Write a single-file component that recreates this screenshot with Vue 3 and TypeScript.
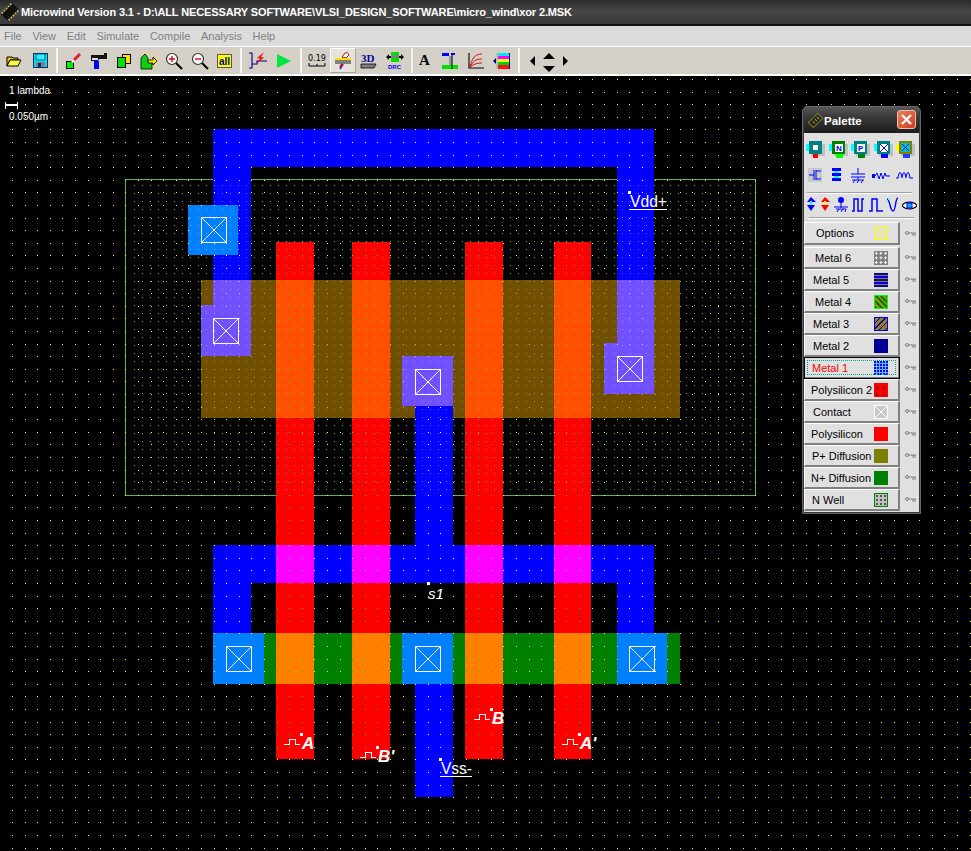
<script setup lang="ts">
type Box = { x: number; y: number; w: number; h: number; fill: string; dot: string; well: string }

const box = (x: number, y: number, w: number, h: number, fill: string, dot: string, well: string): Box => ({ x, y, w, h, fill, dot, well })
const METAL = '#0000ff'
const CONTACT = '#0080ff'
const VIA = '#7050ff'
const polyX = [276, 352, 465, 554]
const polyW = [38, 38, 38, 37]

const shapes: Box[] = [
  box(201, 280, 479, 138, '#705000', '#a8b840', '#8c9a30'),
  box(264, 633, 416, 51, '#008000', '#ffe860', '#ffe860'),
  box(213, 129, 441, 38, METAL, '#ffffff', '#7878ff'),
  box(213, 167, 38, 113, METAL, '#ffffff', '#7878ff'),
  box(617, 167, 37, 113, METAL, '#ffffff', '#7878ff'),
  box(415, 406, 38, 139, METAL, '#ffffff', '#7878ff'),
  box(213, 545, 441, 38, METAL, '#ffffff', '#7878ff'),
  box(213, 583, 38, 50, METAL, '#ffffff', '#7878ff'),
  box(617, 583, 37, 50, METAL, '#ffffff', '#7878ff'),
  box(415, 684, 38, 113, METAL, '#ffffff', '#7878ff'),
  box(188, 205, 50, 50, CONTACT, '#ffffff', '#70b8ff'),
  box(213, 633, 51, 51, CONTACT, '#ffffff', '#70b8ff'),
  box(402, 633, 51, 51, CONTACT, '#ffffff', '#70b8ff'),
  box(617, 633, 50, 51, CONTACT, '#ffffff', '#70b8ff'),
  box(213, 280, 38, 25, VIA, '#c8c8ff', '#9a88ff'),
  box(201, 305, 50, 51, VIA, '#c8c8ff', '#9a88ff'),
  box(402, 356, 51, 50, VIA, '#c8c8ff', '#9a88ff'),
  box(617, 280, 37, 63, VIA, '#c8c8ff', '#9a88ff'),
  box(604, 343, 50, 51, VIA, '#c8c8ff', '#9a88ff'),
]
polyX.forEach((x, i) => {
  const w = polyW[i]
  shapes.push(box(x, 242, w, 517, '#ff0000', '#20e000', '#ff6a6a'))
  shapes.push(box(x, 280, w, 138, '#ff5000', '#30d000', '#ff8a50'))
  shapes.push(box(x, 545, w, 38, '#ff00ff', '#70ffff', '#ff80ff'))
  shapes.push(box(x, 633, w, 51, '#ff8000', '#20b000', '#20b000'))
})

const shapeAt = (x: number, y: number): Box | undefined => {
  for (let i = shapes.length - 1; i >= 0; i--) {
    const s = shapes[i]
    if (x >= s.x && x < s.x + s.w && y >= s.y && y < s.y + s.h) return s
  }
  return undefined
}

const dotPaths: Record<string, string> = {}
const addDot = (x: number, y: number, colour: string) => {
  const px = Math.round(x)
  const py = Math.round(y)
  dotPaths[colour] = (dotPaths[colour] ?? '') + `M${px} ${py}h1v1h-1z`
}
for (let y = 185; y < 495; y += 8) {
  for (let x = 134.3; x < 755; x += 8) {
    addDot(x, y, shapeAt(x, y)?.well ?? '#58b858')
  }
}
for (let y = 79; y < 851; y += 12.6) {
  for (let x = 12; x < 971; x += 12.6) addDot(x, y, shapeAt(x, y)?.dot ?? '#ffff00')
}
const dots = Object.entries(dotPaths).map(([fill, d]) => ({ fill, d }))

const crosses = [
  [201, 217], [213, 318], [415, 369], [617, 356],
  [226, 646], [415, 646], [629, 646],
]
const markers = [
  [301, 734], [377, 747], [491, 709], [579, 734], [629, 192], [428, 583], [440, 759],
]
const pulses = [[284, 744], [360, 757], [474, 719], [562, 744]]
const inputs = [
  { label: 'A', x: 302, y: 749 },
  { label: "B'", x: 378, y: 762 },
  { label: 'B', x: 492, y: 724 },
  { label: "A'", x: 580, y: 749 },
]

const menus = ['File', 'View', 'Edit', 'Simulate', 'Compile', 'Analysis', 'Help']

const layers = [
  { name: 'Metal 6', pad: 10, swatch: 'm6' },
  { name: 'Metal 5', pad: 8, swatch: 'm5' },
  { name: 'Metal 4', pad: 10, swatch: 'm4' },
  { name: 'Metal 3', pad: 8, swatch: 'm3' },
  { name: 'Metal 2', pad: 8, swatch: 'm2' },
  { name: 'Metal 1', pad: 7, swatch: 'm1', active: true },
  { name: 'Polysilicon 2', pad: 6, swatch: 'p2' },
  { name: 'Contact', pad: 8, swatch: 'ct' },
  { name: 'Polysilicon', pad: 6, swatch: 'po' },
  { name: 'P+ Diffusion', pad: 7, swatch: 'pd' },
  { name: 'N+ Diffusion', pad: 6, swatch: 'nd' },
  { name: 'N Well', pad: 7, swatch: 'nw' },
]
</script>

<template>
  <div class="app">
    <header class="titlebar">
      <svg class="app-icon" width="18" height="18" viewBox="0 0 18 18">
        <g transform="rotate(45 9 9)">
          <rect x="5" y="1" width="8" height="16" fill="#111" />
          <path d="M3 3h2M3 6h2M3 9h2M3 12h2M3 15h2M13 3h2M13 6h2M13 9h2M13 12h2M13 15h2" stroke="#d8b840" stroke-width="1.4" />
        </g>
      </svg>
      <span class="title-text">Microwind Version 3.1 - D:\ALL NECESSARY SOFTWARE\VLSI_DESIGN_SOFTWARE\micro_wind\xor 2.MSK</span>
    </header>

    <nav class="menubar">
      <span v-for="m in menus" :key="m">{{ m }}</span>
    </nav>

    <div class="toolbar">
      <div class="tgroup first">
        <button class="tool">
          <svg width="16" height="14" viewBox="0 0 16 14"><path d="M1 3h5l1 1h5v2H4L1 12z" fill="#e8c800" stroke="#000" /><path d="M1 12l3-6h11l-3 6z" fill="#ffff40" stroke="#000" /></svg>
        </button>
        <button class="tool">
          <svg width="15" height="15" viewBox="0 0 15 15"><rect x=".5" y=".5" width="14" height="14" fill="#00e0f0" stroke="#003070" /><rect x="3" y="1" width="9" height="6" fill="#30f0ff" stroke="#003070" stroke-width=".7" /><rect x="3" y="9" width="9" height="5" fill="#808080" /><rect x="5" y="10" width="3" height="4" fill="#003070" /></svg>
        </button>
      </div>
      <span class="sep"></span>
      <div class="tgroup g2">
        <button class="tool">
          <svg width="18" height="18" viewBox="0 0 18 18"><rect x="1.500" y="9.500" width="7" height="7" fill="#00f000" stroke="#000" /><path d="M7 10l8-8" stroke="#e02030" stroke-width="3" /><path d="M7 10l2-2" stroke="#fff" stroke-width="3" /></svg>
        </button>
        <button class="tool">
          <svg width="18" height="18" viewBox="0 0 18 18"><path d="M1 3h13V1h3v6H9L8 9H1z" fill="#111" /><rect x="4" y="9" width="5" height="8" fill="#0000ff" /><rect x="2" y="6" width="6" height="2" fill="#ddd" /></svg>
        </button>
        <button class="tool">
          <svg width="14" height="14" viewBox="0 0 14 14"><rect x="5.500" y=".5" width="8" height="9" fill="#ffe000" stroke="#000" /><rect x=".5" y="3.500" width="8" height="10" fill="#00e000" stroke="#000" /></svg>
        </button>
        <button class="tool">
          <svg width="18" height="18" viewBox="0 0 18 18"><rect x="3.500" y=".5" width="13" height="16" fill="none" stroke="#ffe000" stroke-dasharray="1 2" /><path d="M1 17V6l4-4 3 4v4h4v7z" fill="#10d010" stroke="#000" stroke-width=".8" /><path d="M8 8h5V5l4 4-4 4v-2H8z" fill="#ffe000" stroke="#000" stroke-width=".8" /></svg>
        </button>
        <button class="tool">
          <svg width="18" height="18" viewBox="0 0 18 18"><circle cx="7" cy="7" r="5.500" fill="#fff" stroke="#333" stroke-width="1.200" /><path d="M4 7h6M7 4v6" stroke="#e00020" stroke-width="1.400" /><path d="M11 11l6 6" stroke="#000" stroke-width="2" /></svg>
        </button>
        <button class="tool">
          <svg width="18" height="18" viewBox="0 0 18 18"><circle cx="7" cy="7" r="5.500" fill="#fff" stroke="#333" stroke-width="1.200" /><path d="M4 7h6" stroke="#e00020" stroke-width="1.400" /><path d="M11 11l6 6" stroke="#000" stroke-width="2" /></svg>
        </button>
        <button class="tool">
          <svg width="15" height="14" viewBox="0 0 15 14"><rect x=".5" y=".5" width="14" height="13" fill="#ffff00" stroke="#555" /><text x="2" y="11" class="all-text">all</text></svg>
        </button>
      </div>
      <span class="sep"></span>
      <div class="tgroup">
        <button class="tool">
          <svg width="20" height="18" viewBox="0 0 20 18"><path d="M1 1h3v15H1M4 12h5V9h10" fill="none" stroke="#000080" stroke-width="1.100" /><path d="M16 0l-7 6 3 .5-4 6 8-7-3-.5z" fill="#f01010" /></svg>
        </button>
        <button class="tool">
          <svg width="14" height="14" viewBox="0 0 14 14"><path d="M0 0l14 7-14 7z" fill="#00e840" /></svg>
        </button>
      </div>
      <span class="sep"></span>
      <div class="tgroup g4">
        <button class="tool">
          <svg width="18" height="18" viewBox="0 0 18 18"><text x="0" y="9" class="scale-text">0.19</text><path d="M1 11v3h16v-3M9 12v2" fill="none" stroke="#000" /></svg>
        </button>
        <button class="tool pressed">
          <svg width="18" height="18" viewBox="0 0 18 18"><path d="M11 1a3 3 0 0 1 4 2l-3 3-4-1z" fill="#fff" stroke="#a01010" /><rect x="1" y="6" width="16" height="2" fill="#ffe000" /><rect x="1" y="8" width="16" height="4" fill="#808080" /><path d="M6 17l3-5" stroke="#3030d0" stroke-width="2" /><path d="M6 15l2-3" stroke="#e01010" stroke-width="2" /></svg>
        </button>
        <button class="tool">
          <svg width="18" height="18" viewBox="0 0 18 18"><text x="1" y="10" class="td-text">3D</text><path d="M1 12h15l-2 4H1z" fill="#808080" stroke="#000" stroke-width=".8" /></svg>
        </button>
        <button class="tool">
          <svg width="18" height="20" viewBox="0 0 18 20"><rect x="5" y="1" width="8" height="10" fill="#00e000" /><rect x="5" y="4" width="8" height="3" fill="#808080" /><path d="M0 6l3-3v6zM18 6l-3-3v6z" fill="#000" /><rect x="3" y="5" width="2" height="2" /><rect x="13" y="5" width="2" height="2" /><text x="2" y="18" class="drc-text">DRC</text></svg>
        </button>
      </div>
      <span class="sep"></span>
      <div class="tgroup g5">
        <button class="tool"><span class="serif-a">A</span></button>
        <button class="tool">
          <svg width="16" height="16" viewBox="0 0 16 16"><rect y="0" width="7" height="3" fill="#0000ff" /><rect y="12" width="16" height="4" fill="#00e000" /><rect x="7" y="3" width="3" height="9" fill="#999" /><path d="M10 0v16" stroke="#000" /><rect x="9" y="0" width="4" height="2" fill="#0000ff" /></svg>
        </button>
        <button class="tool">
          <svg width="18" height="18" viewBox="0 0 18 18"><path d="M2 1v15h15" fill="none" stroke="#000" stroke-width="1.100" /><path d="M3 15C5 6 8 2 15 2M3 15C6 9 9 7 15 7M3 15C7 12 10 11 15 11" fill="none" stroke="#e01010" /></svg>
        </button>
        <button class="tool">
          <svg width="18" height="16" viewBox="0 0 18 16"><path d="M0 8l3-3v6z" fill="#000080" /><rect x="3" y="0" width="2" height="16" fill="#bbb" /><rect x="5" y="0" width="11" height="3" fill="#00e8f0" /><rect x="5" y="3" width="11" height="3" fill="#ff00ff" /><rect x="5" y="6" width="11" height="3" fill="#ffff00" /><rect x="5" y="9" width="11" height="3" fill="#00d000" /><rect x="5" y="12" width="11" height="4" fill="#ff1010" /><rect x="16" y="0" width="1" height="16" fill="#000080" /></svg>
        </button>
      </div>
      <span class="sep"></span>
      <div class="nav-arrows">
        <svg width="38" height="22" viewBox="0 0 38 22"><path d="M0 11l5-5v10zM38 11l-5-5v10zM19 3l-6 6h12zM19 22l-6-6h12z" fill="#000" /></svg>
      </div>
    </div>

    <main class="canvas">
      <svg class="layout" width="971" height="851" viewBox="0 0 971 851" shape-rendering="crispEdges">
        <rect x="125.500" y="179.500" width="630" height="316" fill="none" stroke="#58b058" />
        <rect v-for="(s, i) in shapes" :key="i" :x="s.x" :y="s.y" :width="s.w" :height="s.h" :fill="s.fill" />
        <path v-for="d in dots" :key="d.fill" :d="d.d" :fill="d.fill" />
        <g v-for="(c, i) in crosses" :key="'c' + i" :transform="`translate(${c[0]} ${c[1]})`" fill="none" stroke="#fff">
          <rect x=".5" y=".5" width="25" height="25" />
          <path d="M1 1l24 24M25 1L1 25" shape-rendering="auto" />
        </g>
        <rect v-for="(m, i) in markers" :key="'m' + i" :x="m[0] - 1" :y="m[1] - 1" width="3" height="3" fill="#fff" />
        <path v-for="(p, i) in pulses" :key="'p' + i" :d="`M${p[0]} ${p[1]}h5v-5h6v5h5`" fill="none" stroke="#fff" transform="translate(0 .5)" />
        <text v-for="t in inputs" :key="t.label" :x="t.x" :y="t.y" class="pin">{{ t.label }}</text>
        <text x="630" y="207" class="net" textLength="37" lengthAdjust="spacingAndGlyphs">Vdd+</text>
        <path d="M629 209.500h38" stroke="#fff" />
        <text x="428" y="599" class="net small italic" textLength="16" lengthAdjust="spacingAndGlyphs">s1</text>
        <text x="441" y="774" class="net" textLength="31" lengthAdjust="spacingAndGlyphs">Vss-</text>
        <path d="M440 776.500h32" stroke="#fff" />
        <text x="9" y="94" class="scale">1 lambda</text>
        <path d="M5 102v7M17 102v7" stroke="#fff" />
        <path d="M5 105h12" stroke="#fff" stroke-width="2" />
        <text x="9" y="120" class="scale">0.050µm</text>
      </svg>

      <aside class="palette">
        <div class="pal-title">
          <svg width="15" height="15" viewBox="0 0 15 15"><g transform="rotate(45 7.500 7.500)"><rect x="4" y="1" width="7" height="13" fill="#222" stroke="#807820" /><path d="M6 4h3M6 7h3M6 10h3" stroke="#b0a030" /></g></svg>
          <span>Palette</span>
          <span class="close">
            <svg width="13" height="13" viewBox="0 0 13 13"><path d="M2 2l9 9M11 2l-9 9" stroke="#fff" stroke-width="2.400" /></svg>
          </span>
        </div>
        <div class="pal-body">
          <div class="icons row1">
            <svg width="20" height="20" viewBox="0 0 20 20"><rect x="5" y="4" width="14" height="12" fill="#c0c0c0" /><rect y="4" width="4" height="7" fill="#00ffff" /><rect x="3" y="1" width="13" height="13" fill="#008080" /><rect x="7" y="5" width="5" height="5" fill="#fff" /><rect x="7" y="14" width="5" height="4" fill="#ff0000" /></svg>
            <svg width="20" height="20" viewBox="0 0 20 20"><rect x="5" y="4" width="14" height="12" fill="#c0c0c0" /><rect y="4" width="4" height="7" fill="#00ffff" /><rect x="3" y="1" width="13" height="13" fill="#008000" /><rect x="6" y="4" width="8" height="8" fill="#fff" /><text x="7" y="11" class="ico-letter">N</text><rect x="7" y="14" width="7" height="4" fill="#00ff00" /></svg>
            <svg width="20" height="20" viewBox="0 0 20 20"><rect x="5" y="4" width="14" height="12" fill="#c0c0c0" /><rect y="4" width="4" height="7" fill="#00ffff" /><rect x="3" y="1" width="13" height="13" fill="#008080" /><rect x="6" y="4" width="8" height="8" fill="#fff" /><text x="7" y="11" class="ico-letter">P</text><rect x="7" y="14" width="7" height="4" fill="#008000" /></svg>
            <svg width="20" height="20" viewBox="0 0 20 20"><rect x="5" y="4" width="14" height="12" fill="#c0c0c0" /><rect y="4" width="4" height="7" fill="#00ffff" /><rect x="3" y="1" width="13" height="13" fill="#008080" /><rect x="6" y="4" width="8" height="8" fill="#fff" /><path d="M6 4l8 8M14 4l-8 8" stroke="#0000ff" /><rect x="7" y="14" width="7" height="4" fill="#0000ff" /></svg>
            <svg width="20" height="20" viewBox="0 0 20 20"><rect x="5" y="4" width="14" height="12" fill="#c0c0c0" /><rect y="4" width="4" height="7" fill="#ffff00" /><rect x="3" y="1" width="13" height="13" fill="#808000" /><rect x="5" y="3" width="9" height="9" fill="#00c0c0" /><path d="M6 4l7 7M13 4l-7 7" stroke="#0000ff" /><rect x="7" y="14" width="7" height="4" fill="#2040ff" /></svg>
          </div>
          <div class="icons row2">
            <svg width="16" height="16" viewBox="0 0 16 16"><rect width="14" height="14" fill="#c8c8c8" /><path d="M1 7h5M6 2v10M8 2v10M8 3h5M8 11h5" fill="none" stroke="#0000ff" /></svg>
            <svg width="14" height="16" viewBox="0 0 14 16"><rect x="2" y="0" width="9" height="3" fill="#0000ff" /><rect x="4" y="3" width="5" height="2" fill="#00ffff" /><rect x="2" y="5" width="9" height="3" fill="#0000ff" /><rect x="4" y="8" width="5" height="2" fill="#00ffff" /><rect x="2" y="10" width="9" height="3" fill="#0000ff" /></svg>
            <svg width="16" height="16" viewBox="0 0 16 16"><path d="M8 0v6M1 6h14M1 9h14M8 9v3M2 12h12M3 15l2-3M7 15l2-3M11 15l2-3" fill="none" stroke="#0000ff" /></svg>
            <svg width="18" height="10" viewBox="0 0 18 10"><path d="M0 5h3l2-3 2 6 2-6 2 6 2-6 1 3h4" fill="none" stroke="#0000ff" /><rect y="3" width="3" height="4" fill="#0000ff" /></svg>
            <svg width="18" height="10" viewBox="0 0 18 10"><path d="M0 7h2c1-7 3-7 4 0c1-7 3-7 4 0c1-7 3-7 4 0h3" fill="none" stroke="#0000ff" stroke-width="1.100" /></svg>
          </div>
          <div class="rule"></div>
          <div class="icons row3">
            <svg width="11" height="16" viewBox="0 0 11 16"><path d="M5 0l5 5H1z" fill="#0000ff" /><rect x="4" y="4" width="2" height="7" fill="#00ffff" /><path d="M1 8h8l-4 6z" fill="#0000ff" /></svg>
            <svg width="11" height="16" viewBox="0 0 11 16"><path d="M5 0l5 5H1z" fill="#ff0000" /><rect x="4" y="4" width="2" height="7" fill="#ffff00" /><path d="M1 8h8l-4 6z" fill="#ff0000" /></svg>
            <svg width="14" height="16" viewBox="0 0 14 16"><circle cx="7" cy="3" r="3" fill="#0000ff" /><path d="M7 5v6M0 10h14M2 12h10M3 15l2-3M7 15l2-3M11 15l1-3" fill="none" stroke="#0000ff" /></svg>
            <svg width="14" height="16" viewBox="0 0 14 16"><path d="M1 14h2V2h4v12h4V2h2" fill="none" stroke="#0000ff" stroke-width="1.500" /></svg>
            <svg width="14" height="16" viewBox="0 0 14 16"><path d="M0 14h3V2h5v12h6" fill="none" stroke="#0000ff" stroke-width="1.500" /></svg>
            <svg width="13" height="16" viewBox="0 0 13 16"><path d="M1 2c3 0 3 12 6 12s2-13 5-13" fill="none" stroke="#0000ff" stroke-width="1.400" /><path d="M0 5l3-3" stroke="#00ffff" /></svg>
            <svg width="15" height="11" viewBox="0 0 15 11"><path d="M0 5.500C3 1 12 1 15 5.500 12 10 3 10 0 5.500z" fill="#fff" stroke="#000" stroke-width="1.200" /><rect x="5" y="3" width="5" height="5" fill="#00b0ff" stroke="#0000ff" /></svg>
          </div>
          <div class="rule second"></div>
          <div class="layer-row options-row">
            <button class="layer-btn options">
              <span class="opt-label">Options</span>
              <svg class="swatch" width="14" height="13" viewBox="0 0 14 13"><rect x=".5" y=".5" width="13" height="12" fill="none" stroke="#ffff00" /><path d="M1 1l12 11M13 1L1 12" stroke="#ffff00" /></svg>
            </button>
            <svg class="key" width="11" height="6" viewBox="0 0 11 6"><circle cx="2" cy="2" r="1.500" fill="none" stroke="#808080" /><path d="M3 2h8M8 2v3M10 2v3" stroke="#808080" /></svg>
          </div>
          <div v-for="l in layers" :key="l.name" class="layer-row">
            <button class="layer-btn" :class="{ active: l.active }">
              <span class="label" :style="{ paddingLeft: l.pad + 'px' }">{{ l.name }}</span>
              <span class="swatch" :class="l.swatch"></span>
            </button>
            <svg class="key" width="11" height="6" viewBox="0 0 11 6"><circle cx="2" cy="2" r="1.500" fill="none" stroke="#808080" /><path d="M3 2h8M8 2v3M10 2v3" stroke="#808080" /></svg>
          </div>
        </div>
      </aside>
    </main>
  </div>
</template>

<style scoped>
.app {
  width: 971px;
  height: 851px;
  display: flex;
  flex-direction: column;
  overflow: hidden;
  font-family: "Liberation Sans", Arial, sans-serif;
  background: #000;
}
.titlebar {
  height: 26px;
  flex: none;
  display: flex;
  align-items: center;
  gap: 2px;
  padding-left: 1px;
  box-sizing: border-box;
  background: linear-gradient(#2a2a2a 0, #474747 45%, #3c3c3c 90%);
  border-bottom: 2px solid #111;
}
.title-text {
  color: #fff;
  font-size: 11px;
  font-weight: 700;
  letter-spacing: -0.13px;
  white-space: nowrap;
}
.menubar {
  height: 20px;
  flex: none;
  display: flex;
  align-items: center;
  gap: 10.700px;
  padding-left: 4px;
  font-size: 11px;
  color: #808080;
  background: #dcdcdc;
}
.toolbar {
  height: 30px;
  flex: none;
  box-sizing: border-box;
  display: flex;
  align-items: center;
  padding-left: 1px;
  background: #d4d0c8;
  border-top: 1px solid #fff;
  border-bottom: 2px solid #fff;
}
.tgroup {
  display: flex;
}
.g2 .tool {
  width: 25.200px;
}
.g4 {
  margin-left: -1px;
}
.g5 {
  margin-left: -5px;
}
.tool {
  width: 26px;
  height: 25px;
  padding: 0;
  border: 0;
  background: transparent;
  display: flex;
  align-items: center;
  justify-content: center;
}
.tool.pressed {
  background: #e6e3dc;
  border: 1px solid;
  border-color: #fff #a8a49c #a8a49c #fff;
  box-sizing: border-box;
}
.sep {
  width: 2px;
  height: 25px;
  margin: 0 3px;
  background: #f4f4f4;
}
.nav-arrows {
  display: flex;
  margin-left: 7px;
}
.all-text {
  font: 700 10px "Liberation Sans Narrow", "Liberation Sans", sans-serif;
  fill: #000080;
}
.scale-text {
  font: 8px "DejaVu Sans", sans-serif;
  fill: #000;
}
.td-text {
  font: 700 11px "Liberation Serif", serif;
  fill: #0000a0;
}
.drc-text {
  font: 700 6px "Liberation Sans", sans-serif;
  fill: #0000ff;
}
.serif-a {
  font: 700 15px "Liberation Serif", serif;
  color: #000;
}
.canvas {
  position: relative;
  flex: 1;
  background: #000;
}
.layout {
  position: absolute;
  left: 0;
  top: -76px;
}
.net {
  font: 17px "Liberation Sans", sans-serif;
  fill: #fff;
}
.net.small {
  font-size: 15px;
}
.net.italic {
  font-style: italic;
}
.pin {
  font: italic 700 17px "Liberation Sans", sans-serif;
  fill: #fff;
}
.scale {
  font: 10px "Liberation Sans", sans-serif;
  fill: #fff;
}
.palette {
  position: absolute;
  left: 802px;
  top: 30px;
  width: 119px;
  height: 408px;
  box-sizing: border-box;
  background: #e0e0e0;
  border: 2px solid #3a3a3a;
  border-top: 0;
  border-radius: 6px 6px 0 0;
  outline: 1px solid #666;
  outline-offset: -1px;
  display: flex;
  flex-direction: column;
}
.pal-title {
  height: 27px;
  flex: none;
  display: flex;
  align-items: center;
  gap: 1px;
  padding: 2px 3px 0 4px;
  box-sizing: border-box;
  border-radius: 5px 5px 0 0;
  background: linear-gradient(#5a5a5a, #3a3a3a 40%, #1c1c1c);
  color: #fff;
  font-size: 11.500px;
  font-weight: 700;
}
.close {
  margin-left: auto;
  margin-top: -2px;
  width: 19px;
  height: 19px;
  box-sizing: border-box;
  display: flex;
  align-items: center;
  justify-content: center;
  border: 1px solid #e8c0b0;
  border-radius: 3px;
  background: linear-gradient(135deg, #e8805a, #d03a20);
}
.pal-body {
  flex: 1;
  display: flex;
  flex-direction: column;
  padding-top: 7px;
}
.icons {
  display: flex;
  align-items: center;
}
.row1 {
  height: 20px;
  justify-content: space-between;
  padding: 0 3px 0 2px;
}
.row2 {
  height: 16px;
  margin-top: 8px;
  justify-content: space-between;
  padding: 0 5px 0 4px;
}
.row3 {
  height: 16px;
  justify-content: space-between;
  padding: 0 2px 0 2px;
}
.rule {
  height: 1px;
  margin: 8px 7px 3px 3px;
  background: #a0a0a0;
  border-bottom: 1px solid #fff;
}
.rule.second {
  margin: 4px 5px 3px 5px;
}
.layer-row {
  height: 22px;
  flex: none;
  display: flex;
  align-items: center;
}
.options-row {
  height: 25px;
  align-items: flex-start;
}
.options-row .layer-btn {
  height: 23px;
}
.options-row .key {
  margin-top: 9px;
}
.layer-btn {
  width: 96px;
  height: 22px;
  flex: none;
  padding: 0;
  box-sizing: border-box;
  display: flex;
  align-items: center;
  justify-content: space-between;
  background: #e0e0e0;
  border: 1px solid;
  border-color: #fff #808080 #808080 #fff;
  border-bottom-width: 2px;
  border-right-width: 2px;
  font: 11px "Liberation Sans", sans-serif;
  color: #000;
}
.layer-btn.active {
  color: #ff0000;
  outline: 1px solid #000;
  outline-offset: -1px;
  position: relative;
}
.layer-btn.active::after {
  content: "";
  position: absolute;
  inset: 2px;
  border: 1px dotted #00a0a0;
}
.opt-label {
  padding-left: 11px;
}
.swatch {
  display: block;
  flex: none;
  width: 14px;
  height: 14px;
  box-sizing: border-box;
  margin-right: 10px;
}
svg.swatch {
  height: 13px;
}
.m6 {
  background: #808080 radial-gradient(circle, #fff 0 1px, transparent 1.200px) 0 0 / 4.600px 4.600px;
}
.m5 {
  background: repeating-linear-gradient(#0000e0 0 2px, #a08000 2px 3px);
}
.m4 {
  border: 1px solid #00ff00;
  background: repeating-linear-gradient(45deg, #008000 0 2px, #a09000 2px 4px);
}
.m3 {
  border: 1px solid #0000ff;
  background: repeating-linear-gradient(135deg, #908020 0 3px, #0000a0 3px 4px);
}
.m2 {
  background: #000080 repeating-linear-gradient(90deg, transparent 0 2px, #0000c0 2px 3px);
}
.m1 {
  background: #0000ff;
  background-image: repeating-linear-gradient(90deg, transparent 0 2px, #60c0ff 2px 3px), repeating-linear-gradient(transparent 0 2px, #60c0ff 2px 3px);
}
.p2 {
  background:
    linear-gradient(#800000, #800000) 2px 2px / 1px 4px no-repeat,
    linear-gradient(#800000, #800000) 2px 5px / 3px 1px no-repeat,
    linear-gradient(#800000, #800000) 9px 2px / 1px 4px no-repeat,
    linear-gradient(#800000, #800000) 9px 5px / 3px 1px no-repeat,
    linear-gradient(#800000, #800000) 2px 9px / 1px 4px no-repeat,
    linear-gradient(#800000, #800000) 2px 12px / 3px 1px no-repeat,
    linear-gradient(#800000, #800000) 9px 9px / 1px 4px no-repeat,
    linear-gradient(#800000, #800000) 9px 12px / 3px 1px no-repeat,
    #ff0000;
}
.ct {
  border: 1px solid #fff;
  background: linear-gradient(45deg, transparent 47%, #fff 48%, #fff 52%, transparent 53%), linear-gradient(135deg, #c8c8c8 47%, #fff 48%, #fff 52%, #c8c8c8 53%);
}
.po {
  background: #ff0000;
}
.pd {
  background: #808000;
}
.nd {
  background: #008000;
}
.nw {
  border: 1px solid #008000;
  background: #c0c0c0 radial-gradient(circle, #505050 0 .7px, transparent 1px) 0 0 / 4px 4px;
}
.key {
  margin-left: 5px;
  flex: none;
}
.ico-letter {
  font: 700 8px "Liberation Sans", sans-serif;
  fill: #0000ff;
}
</style>

<style>
html,
body {
  margin: 0;
  background: #000;
}
</style>
